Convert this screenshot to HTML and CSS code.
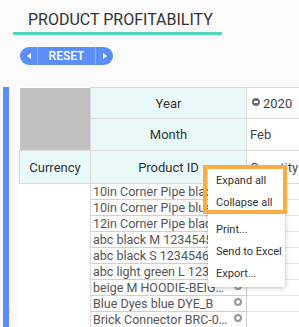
FILE: index.html
```html
<!DOCTYPE html>
<html lang="en">

<head>
    <meta charset="UTF-8">
    <meta name="viewport" content="width=device-width, initial-scale=1.0">
    <title>Product Profitability</title>
    <link rel="stylesheet" href="styles.css">
</head>

<body>
    <div class="header">
        <h1 class="title">PRODUCT PROFITABILITY</h1>
        <div class="nav-btn">
            <span class="arrow arrow-left"></span>
            <span class="label">RESET</span>
            <span class="arrow arrow-right"></span>
        </div>
    </div>

    <div class="pivot">
        <div class="side-bar"><span class="grip"></span></div>
        <div class="grid-wrap">
            <table class="grid">
                <colgroup>
                    <col class="c-cur">
                    <col class="c-prod">
                    <col class="c-val">
                </colgroup>
                <tr class="r-year">
                    <td class="corner" rowspan="2"></td>
                    <th class="hdr">Year</th>
                    <td class="val"><span class="toggle minus"></span>2020</td>
                </tr>
                <tr class="r-month">
                    <th class="hdr">Month</th>
                    <td class="val">Feb</td>
                </tr>
                <tr class="r-head">
                    <th class="hdr">Currency</th>
                    <th class="hdr">Product ID</th>
                    <td class="val">Quantity</td>
                </tr>
                <tr class="r-data">
                    <td class="blank" rowspan="9"></td>
                    <td class="prod"><span class="name">10in Corner Pipe black CP-10</span><span class="toggle plus"></span></td>
                    <td class="cell"></td>
                </tr>
                <tr class="r-data">
                    <td class="prod"><span class="name">10in Corner Pipe blue CP-10B</span><span class="toggle plus"></span></td>
                    <td class="cell"></td>
                </tr>
                <tr class="r-data">
                    <td class="prod"><span class="name">12in Corner Pipe black CP-12</span><span class="toggle plus"></span></td>
                    <td class="cell"></td>
                </tr>
                <tr class="r-data">
                    <td class="prod"><span class="name">abc black M 1234545</span><span class="toggle plus"></span></td>
                    <td class="cell"></td>
                </tr>
                <tr class="r-data">
                    <td class="prod"><span class="name">abc black S 1234546</span><span class="toggle plus"></span></td>
                    <td class="cell"></td>
                </tr>
                <tr class="r-data">
                    <td class="prod"><span class="name">abc light green L 123454</span><span class="toggle plus"></span></td>
                    <td class="cell"></td>
                </tr>
                <tr class="r-data">
                    <td class="prod"><span class="name">beige M HOODIE-BEIGE-M</span><span class="toggle plus"></span></td>
                    <td class="cell"></td>
                </tr>
                <tr class="r-data">
                    <td class="prod"><span class="name">Blue Dyes blue DYE_B</span><span class="toggle plus"></span></td>
                    <td class="cell"></td>
                </tr>
                <tr class="r-data">
                    <td class="prod"><span class="name">Brick Connector BRC-0100</span><span class="toggle plus"></span></td>
                    <td class="cell"></td>
                </tr>
            </table>
        </div>

        <ul class="ctx-menu">
            <li>Expand all</li>
            <li>Collapse all</li>
            <li class="sep">Print...</li>
            <li>Send to Excel</li>
            <li>Export...</li>
        </ul>
        <div class="highlight"></div>
    </div>
</body>

</html>
```

FILE: styles.css
```css
body {
    font-family: 'Roboto', sans-serif;
    background-color: #fafafa;
    margin: 0;
    height: 327px;
    overflow: hidden;
}

.header {
    padding-top: 10px;
}

.title {
    display: block;
    width: 194px;
    margin: 0 0 12px 13px;
    padding: 0 0 2px 15px;
    font-size: 16px;
    font-weight: 400;
    line-height: 20px;
    color: #333;
    white-space: nowrap;
    border-bottom: 3px solid #55d6c2;
}

.nav-btn {
    display: flex;
    width: 93px;
    height: 18px;
    margin-left: 20px;
    border-radius: 9px;
    overflow: hidden;
    background-color: #5b8ef6;
}

.nav-btn .arrow {
    width: 17px;
    display: flex;
    align-items: center;
    justify-content: center;
}

.nav-btn .arrow::before {
    content: '';
    border-top: 3px solid transparent;
    border-bottom: 3px solid transparent;
}

.arrow-left::before {
    border-right: 4px solid #fff;
}

.arrow-right::before {
    border-left: 4px solid #fff;
}

.nav-btn .label {
    width: 57px;
    border-left: 1px solid #8fb2fa;
    border-right: 1px solid #8fb2fa;
    color: #fff;
    font-size: 12px;
    font-weight: 500;
    line-height: 18px;
    text-align: center;
}

.pivot {
    position: relative;
    display: flex;
    margin-top: 22px;
    height: 240px;
}

.side-bar {
    position: relative;
    width: 6px;
    margin-left: 3px;
    margin-right: 10px;
    background-color: #5b8cff;
}

.grip {
    position: absolute;
    right: -2px;
    top: 222px;
    width: 2px;
    height: 4px;
    background-color: #dde6fb;
}

.grid-wrap {
    flex: 1;
    overflow: hidden;
    background-color: #fff;
}

.grid {
    table-layout: fixed;
    border-collapse: collapse;
    width: 400px;
    font-size: 13px;
    line-height: 15px;
    color: #333;
}

.c-cur {
    width: 71px;
}

.c-prod {
    width: 156px;
}

.c-val {
    width: 173px;
}

.grid th,
.grid td {
    padding: 0;
    border: 1px solid #dadada;
}

.r-year {
    height: 31px;
}

.r-month {
    height: 32px;
}

.r-head {
    height: 33px;
}

.r-data {
    height: 16px;
}

.corner {
    background-color: #c0c0c0;
    border-top: none !important;
    border-left: none !important;
}

.hdr {
    background-color: #e9f8f8;
    font-weight: 400;
    text-align: center;
}

.val {
    padding-left: 3px !important;
    color: #444;
    white-space: nowrap;
}

.blank {
    border-left: none !important;
    border-bottom: none !important;
}

.prod {
    height: 15px;
    padding: 0 0 0 2px !important;
    font-size: 12.5px;
    line-height: 15px;
    color: #555;
    white-space: nowrap;
    overflow: hidden;
    border-color: #cfcfcf !important;
}

.prod .name {
    display: inline-block;
    width: 135px;
    overflow: hidden;
    text-overflow: ellipsis;
    vertical-align: top;
}

.cell {
    border-color: #e4e4e4 !important;
}

.toggle {
    display: inline-block;
    position: relative;
    width: 8px;
    height: 8px;
    border-radius: 50%;
    vertical-align: top;
}

.toggle::before,
.toggle::after {
    content: '';
    position: absolute;
    background-color: #fff;
}

.toggle::before {
    left: 2px;
    top: 3px;
    width: 4px;
    height: 2px;
}

.plus {
    background-color: #9a9a9a;
    margin-left: 6px;
    top: 2px;
}

.plus::after {
    left: 3px;
    top: 2px;
    width: 2px;
    height: 4px;
}

.minus {
    background-color: #6e6e6e;
    margin: 0 3px 0 2px;
    top: 2px;
}

.ctx-menu {
    position: absolute;
    left: 208px;
    top: 81px;
    width: 77px;
    margin: 0;
    padding: 2px 0;
    list-style: none;
    background-color: #fff;
    box-shadow: 0 1px 5px rgba(0, 0, 0, 0.25);
    border-radius: 2px;
    font-size: 11px;
    color: #333;
}

.ctx-menu li {
    padding-left: 8px;
    line-height: 22px;
    white-space: nowrap;
}

.ctx-menu .sep {
    margin-top: 5px;
}

.highlight {
    position: absolute;
    left: 203px;
    top: 78px;
    width: 76px;
    height: 41px;
    border: 4px solid #f9ab44;
}
```
